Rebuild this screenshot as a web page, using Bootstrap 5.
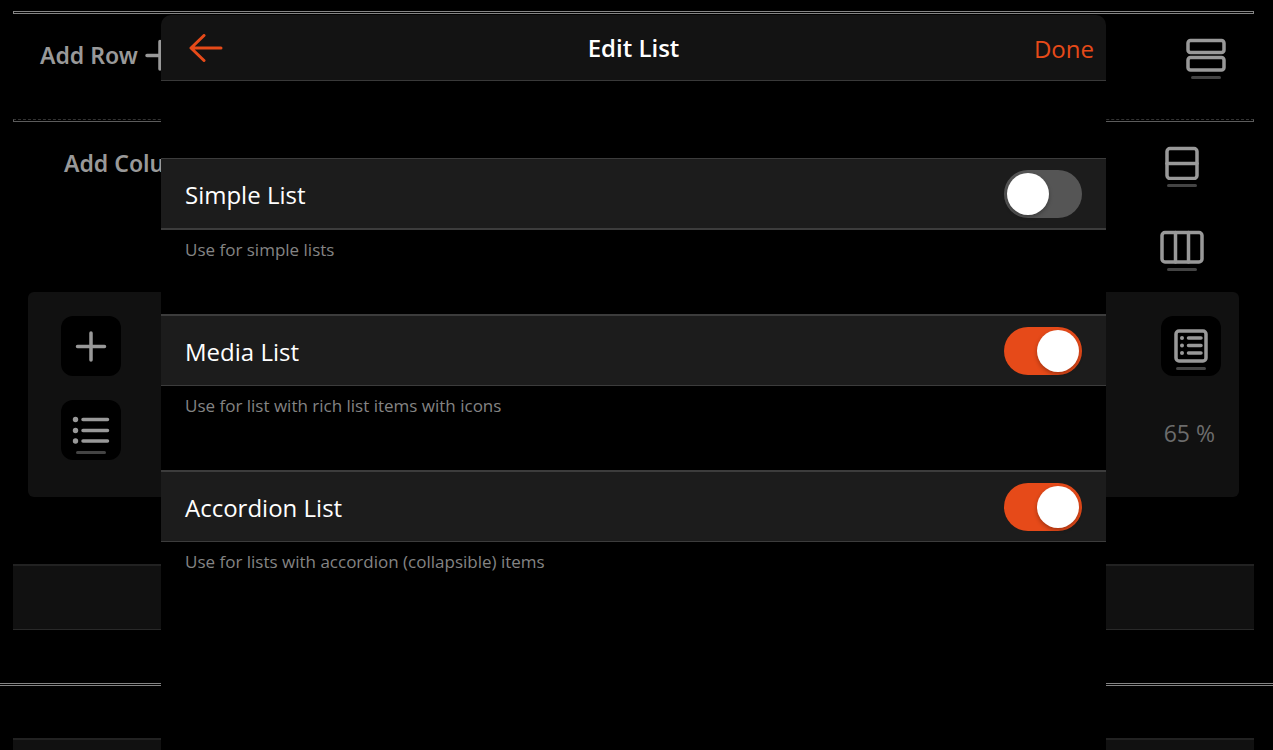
<!DOCTYPE html>
<html lang="en">
<head>
<meta charset="utf-8">
<meta name="viewport" content="width=device-width, initial-scale=1">
<title>Edit List</title>
<link href="https://cdn.jsdelivr.net/npm/bootstrap@5.3.0/dist/css/bootstrap.min.css" rel="stylesheet">
<style>
  body { background: #000; color: #999; font-family: "Open Sans", "Noto Sans", sans-serif; font-size: 24px; line-height: 32px; height: 100vh; overflow: hidden; }
  main { height: 100vh; overflow: hidden; }
  button { background: none; border: 0; padding: 0; color: inherit; }
  svg { display: block; fill: none; stroke: #999; stroke-width: 3.5; stroke-linecap: round; stroke-linejoin: round; }
  svg .dot { fill: #999; stroke: none; }
  .builder { padding: 11px 19px 0 13px; }
  .rule { height: 3px; border: 1px solid #848484; }
  .rule-dashed { border-color: #5c5c5c; border-top: 1px dashed #333; }
  .rule-full { border-width: 1px 0; margin-top: 53px; margin-bottom: 52px; }
  .row-tools { height: 105px; padding: 24px 28px 0 27px; }
  .col-tools { height: 170px; padding: 24px 50px 0 51px; }
  .add-btn { font-family: "Noto Sans", sans-serif; font-weight: 600; font-size: 23px; line-height: 34px; gap: 7px; white-space: nowrap; }
  .under { gap: 4px; }
  .under::after { content: ""; width: 30px; height: 3px; border-radius: 2px; background: #444; }
  .col-icons { gap: 43px; }
  .block-panel { background: #111; border-radius: 6px; margin: 0 15px; padding: 24px 18px 37px 33px; }
  .tile { width: 60px; height: 60px; border-radius: 12px; background: #000; }
  .tile.under { padding-bottom: 6px; }
  .percent { color: #6c6c6c; font-size: 23px; line-height: 34px; margin-top: 40px; padding-right: 6px; }
  .strip { height: 66px; background: #111; border-top: 2px solid #222; border-bottom: 1px solid #292929; }
  .strip-gap { margin-top: 67px; }
  .overlay { inset: 0; padding: 15px 6px 0 0; }
  .sheet { width: 945px; background: #000; border-radius: 10px 10px 0 0; overflow: hidden; }
  .sheet-head { height: 66px; background: #131313; border-bottom: 1px solid #393939; padding: 0 12px; margin-bottom: 77px; display: grid; grid-template-columns: 1fr auto 1fr; align-items: center; }
  .sheet-head h1 { font-size: 24px; line-height: 32px; font-weight: 600; color: #fff; }
  .sheet-head svg { stroke: #e64a19; stroke-width: 3; }
  .back-btn { padding-left: 16px; }
  .done-btn { color: #e64a19; font-size: 24px; line-height: 32px; padding-top: 2px; }
  .option { height: 72px; background: #1c1c1c; border: solid #3c3c3c; border-width: 2px 0 1px; padding: 0 24px; color: #fff; font-size: 24px; }
  .option.first { border-width: 1px 0 2px; }
  .option label { padding-top: 2px; }
  .hint { height: 84px; padding: 6px 24px; color: #848484; font-size: 17px; line-height: 28px; }
  .form-check-input.toggle { width: 78px; height: 48px; margin: 0; float: none; border: 0; border-radius: 24px; background: #555; padding: 3px; }
  .toggle::before { content: ""; display: block; width: 42px; height: 42px; border-radius: 50%; background: #fff; box-shadow: 0 2px 4px rgba(0,0,0,.3); }
  .form-check-input.toggle:checked { background: #e64a19; }
  .toggle:checked::before { margin-left: 30px; }
</style>
</head>
<body>
<main>
  <div class="builder">
    <div class="rule"></div>
    <div class="row-tools d-flex justify-content-between align-items-start">
      <button class="add-btn d-flex align-items-center" type="button">Add Row
        <svg width="30" height="34" viewBox="0 0 30 34"><path d="M2 17.500H28.500M15 3.500V31"/></svg>
      </button>
      <button class="under d-flex flex-column align-items-center" type="button" aria-label="Row layout">
        <svg width="40" height="34" viewBox="0 0 40 34"><rect x="2" y="2.500" width="36" height="12" rx="2.500"/><rect x="2" y="19.500" width="36" height="12.500" rx="2.500"/></svg>
      </button>
    </div>
    <div class="rule rule-dashed"></div>
    <div class="col-tools d-flex justify-content-between align-items-start">
      <button class="add-btn d-flex align-items-center" type="button">Add Column</button>
      <div class="col-icons d-flex flex-column align-items-center">
        <button class="under d-flex flex-column align-items-center" type="button" aria-label="Split column">
          <svg width="34" height="34" viewBox="0 0 34 34"><rect x="2" y="2.500" width="30" height="30" rx="3"/><path d="M2 17.500H32"/></svg>
        </button>
        <button class="under d-flex flex-column align-items-center" type="button" aria-label="Column layout">
          <svg width="44" height="34" viewBox="0 0 44 34"><rect x="2" y="2.500" width="40" height="29.500" rx="3"/><path d="M15.500 2.500V32M28.500 2.500V32"/></svg>
        </button>
      </div>
    </div>
    <div class="block-panel d-flex justify-content-between">
      <div class="d-flex flex-column gap-4">
        <button class="tile d-flex align-items-center justify-content-center" type="button" aria-label="Add block">
          <svg width="32" height="32" viewBox="0 0 32 32"><path d="M2.500 16.500H29.500M16 3V30"/></svg>
        </button>
        <button class="tile under d-flex flex-column align-items-center justify-content-end" type="button" aria-label="List block">
          <svg width="38" height="32" viewBox="0 0 38 32"><circle class="dot" cx="3.500" cy="4.500" r="2.700"/><circle class="dot" cx="3.500" cy="15.500" r="2.700"/><circle class="dot" cx="3.500" cy="26" r="2.700"/><path d="M11 4.500H35.500M11 15.500H35.500M11 26H35.500"/></svg>
        </button>
      </div>
      <div class="d-flex flex-column align-items-end">
        <button class="tile under d-flex flex-column align-items-center justify-content-end" type="button" aria-label="List settings">
          <svg width="34" height="34" viewBox="0 0 34 34"><rect x="2" y="2" width="30" height="30" rx="3"/><circle class="dot" cx="8" cy="9" r="2"/><circle class="dot" cx="8" cy="16.500" r="2"/><circle class="dot" cx="8" cy="24" r="2"/><path d="M14.500 9H27M14.500 16.500H27M14.500 24H27"/></svg>
        </button>
        <span class="percent">65 %</span>
      </div>
    </div>
    <div class="strip strip-gap"></div>
  </div>
  <div class="rule rule-full"></div>
  <div class="builder pt-0"><div class="strip"></div></div>
</main>

<div class="overlay position-fixed d-flex justify-content-center">
  <section class="sheet" role="dialog" aria-labelledby="sheetTitle">
    <header class="sheet-head">
      <button type="button" aria-label="Back" class="back-btn">
        <svg width="34" height="28" viewBox="0 0 34 28"><path d="M32 14H2.500M15 1.500L2 14L15 26.500"/></svg>
      </button>
      <h1 id="sheetTitle" class="m-0">Edit List</h1>
      <button type="button" class="done-btn text-end">Done</button>
    </header>
    <div class="option first d-flex align-items-center justify-content-between">
      <label for="simple">Simple List</label>
      <input class="form-check-input toggle" type="checkbox" role="switch" id="simple">
    </div>
    <div class="hint">Use for simple lists</div>
    <div class="option d-flex align-items-center justify-content-between">
      <label for="media">Media List</label>
      <input class="form-check-input toggle" type="checkbox" role="switch" id="media" checked>
    </div>
    <div class="hint">Use for list with rich list items with icons</div>
    <div class="option d-flex align-items-center justify-content-between">
      <label for="accordionList">Accordion List</label>
      <input class="form-check-input toggle" type="checkbox" role="switch" id="accordionList" checked>
    </div>
    <div class="hint">Use for lists with accordion (collapsible) items</div>
  </section>
</div>
<script src="https://cdn.jsdelivr.net/npm/bootstrap@5.3.0/dist/js/bootstrap.bundle.min.js"></script>
</body>
</html>
